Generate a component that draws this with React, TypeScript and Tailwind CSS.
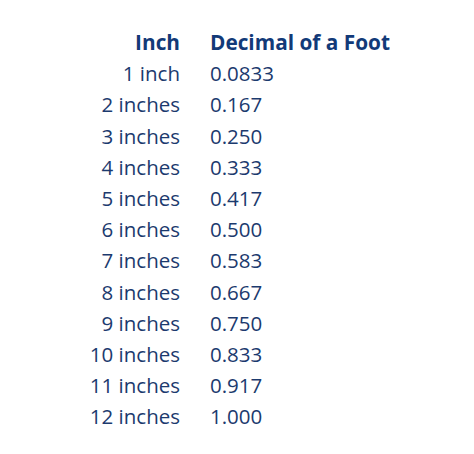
const rows: [string, string][] = [
  ["1 inch", "0.0833"],
  ["2 inches", "0.167"],
  ["3 inches", "0.250"],
  ["4 inches", "0.333"],
  ["5 inches", "0.417"],
  ["6 inches", "0.500"],
  ["7 inches", "0.583"],
  ["8 inches", "0.667"],
  ["9 inches", "0.750"],
  ["10 inches", "0.833"],
  ["11 inches", "0.917"],
  ["12 inches", "1.000"],
];

export default function App() {
  return (
    <div className="w-[474px] h-[454px] bg-white pt-[28px] font-['Open_Sans','Noto_Sans',sans-serif] text-[20px]">
      <div className="flex h-[30px] items-center text-[20.8px] font-bold text-[#123a78]">
        <div className="w-[180px] text-right">Inch</div>
        <div className="ml-[30px]">Decimal of a Foot</div>
      </div>
      {rows.map(([a, b]) => (
        <div key={a} className="flex h-[31.2px] items-center text-[20.5px] text-[#1c3a6e]">
          <div className="w-[180px] text-right">{a}</div>
          <div className="ml-[30px]">{b}</div>
        </div>
      ))}
    </div>
  );
}
